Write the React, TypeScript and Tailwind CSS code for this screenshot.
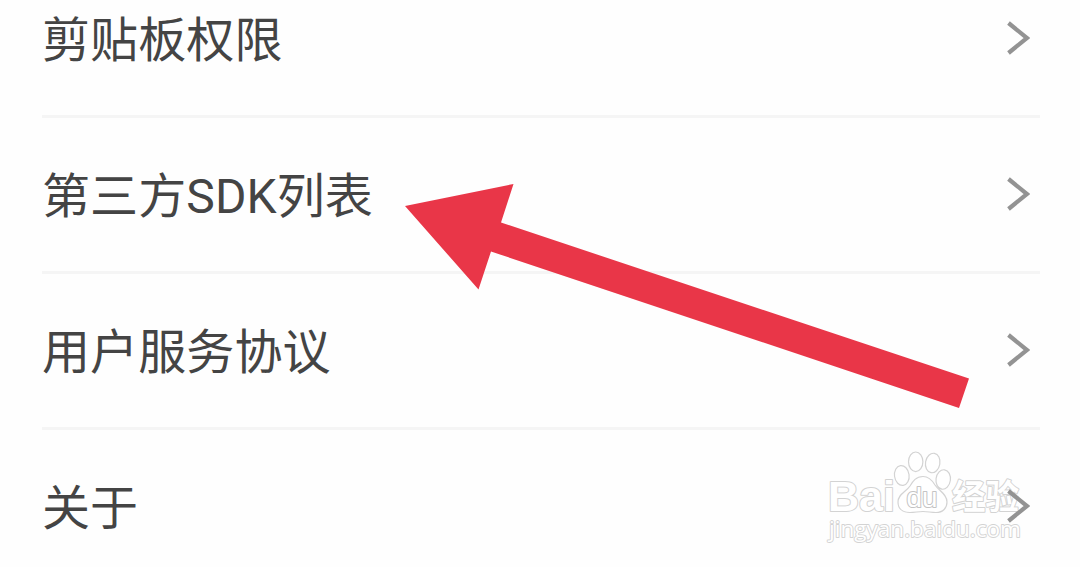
const items = ['剪贴板权限', '第三方SDK列表', '用户服务协议', '关于'];

function Chevron() {
  return (
    <svg className="mb-px h-9 w-6 shrink-0" viewBox="0 0 24 36" fill="none">
      <path d="M2.5 3 L21 18 L2.5 33" stroke="#939393" strokeWidth="4.2" />
    </svg>
  );
}

function Arrow() {
  return (
    <svg className="pointer-events-none absolute inset-0 h-full w-full" viewBox="0 0 1080 567">
      <polygon
        points="405,206 513.5,184 501,222.5 969,378.5 959,408 491,251.5 478.5,289.5"
        fill="#e93648"
      />
    </svg>
  );
}

function Watermark() {
  return (
    <svg
      className="pointer-events-none absolute top-[440px] left-[820px] h-[110px] w-[220px]"
      viewBox="0 0 220 110"
      fill="#ffffff"
      stroke="#d3d3d3"
      strokeWidth="2"
      strokeLinejoin="round"
      paintOrder="stroke"
    >
      <text
        x="8"
        y="71"
        fontSize="42"
        textLength="67"
        lengthAdjust="spacingAndGlyphs"
        className="font-['Liberation_Sans',sans-serif] font-bold"
      >
        Bai
      </text>
      {/* paw */}
      <g strokeWidth="1.2" paintOrder="normal">
        <ellipse cx="81.8" cy="35.5" rx="7.3" ry="10" transform="rotate(-8 81.8 35.5)" />
        <ellipse cx="95.7" cy="21.8" rx="7.2" ry="9.8" />
        <ellipse cx="112.7" cy="23" rx="7.2" ry="9.8" transform="rotate(10 112.7 23)" />
        <ellipse cx="123.2" cy="39.5" rx="7.2" ry="9.8" transform="rotate(8 123.2 39.5)" />
        <path d="M103 36.5 C96 36.5 93 41 90 46 C86 52 78 54 78 62 C78 69 83 72.5 90 72.5 C95 72.5 98 71.5 103 71.5 C108 71.5 111 72.5 116 72.5 C123 72.5 127 68 127 62 C127 54 119 51 115 45 C112 40 109 36.5 103 36.5 Z" />
      </g>
      <text
        x="86.5"
        y="67"
        fontSize="27"
        textLength="31"
        lengthAdjust="spacingAndGlyphs"
        stroke="#c4c4c4"
        className="font-['Liberation_Sans',sans-serif]"
      >
        du
      </text>
      <text
        x="132"
        y="69"
        fontSize="34"
        textLength="67"
        lengthAdjust="spacingAndGlyphs"
        className="font-['Noto_Sans_CJK_SC',sans-serif] font-bold"
      >
        经验
      </text>
      <text
        x="9"
        y="97"
        fontSize="22"
        textLength="192"
        lengthAdjust="spacingAndGlyphs"
        strokeWidth="1.8"
        className="font-['Open_Sans',sans-serif]"
      >
        jingyan.baidu.com
      </text>
    </svg>
  );
}

export default function App() {
  return (
    <div className="relative h-[567px] w-[1080px] overflow-hidden bg-[#fefefe] font-['Roboto','Noto_Sans_CJK_SC',sans-serif]">
      <Watermark />
      <ul className="relative -mt-[38px] pr-10 pl-[42px]">
        {items.map((item) => (
          <li
            key={item}
            className="flex h-[156px] items-center justify-between border-b-3 border-[#f5f5f5] pr-[10px] text-[48px] leading-none tracking-[0.1px] text-[#444444] last:border-transparent"
          >
            <span className="pt-[5px]">{item}</span>
            <Chevron />
          </li>
        ))}
      </ul>
      <Arrow />
    </div>
  );
}
